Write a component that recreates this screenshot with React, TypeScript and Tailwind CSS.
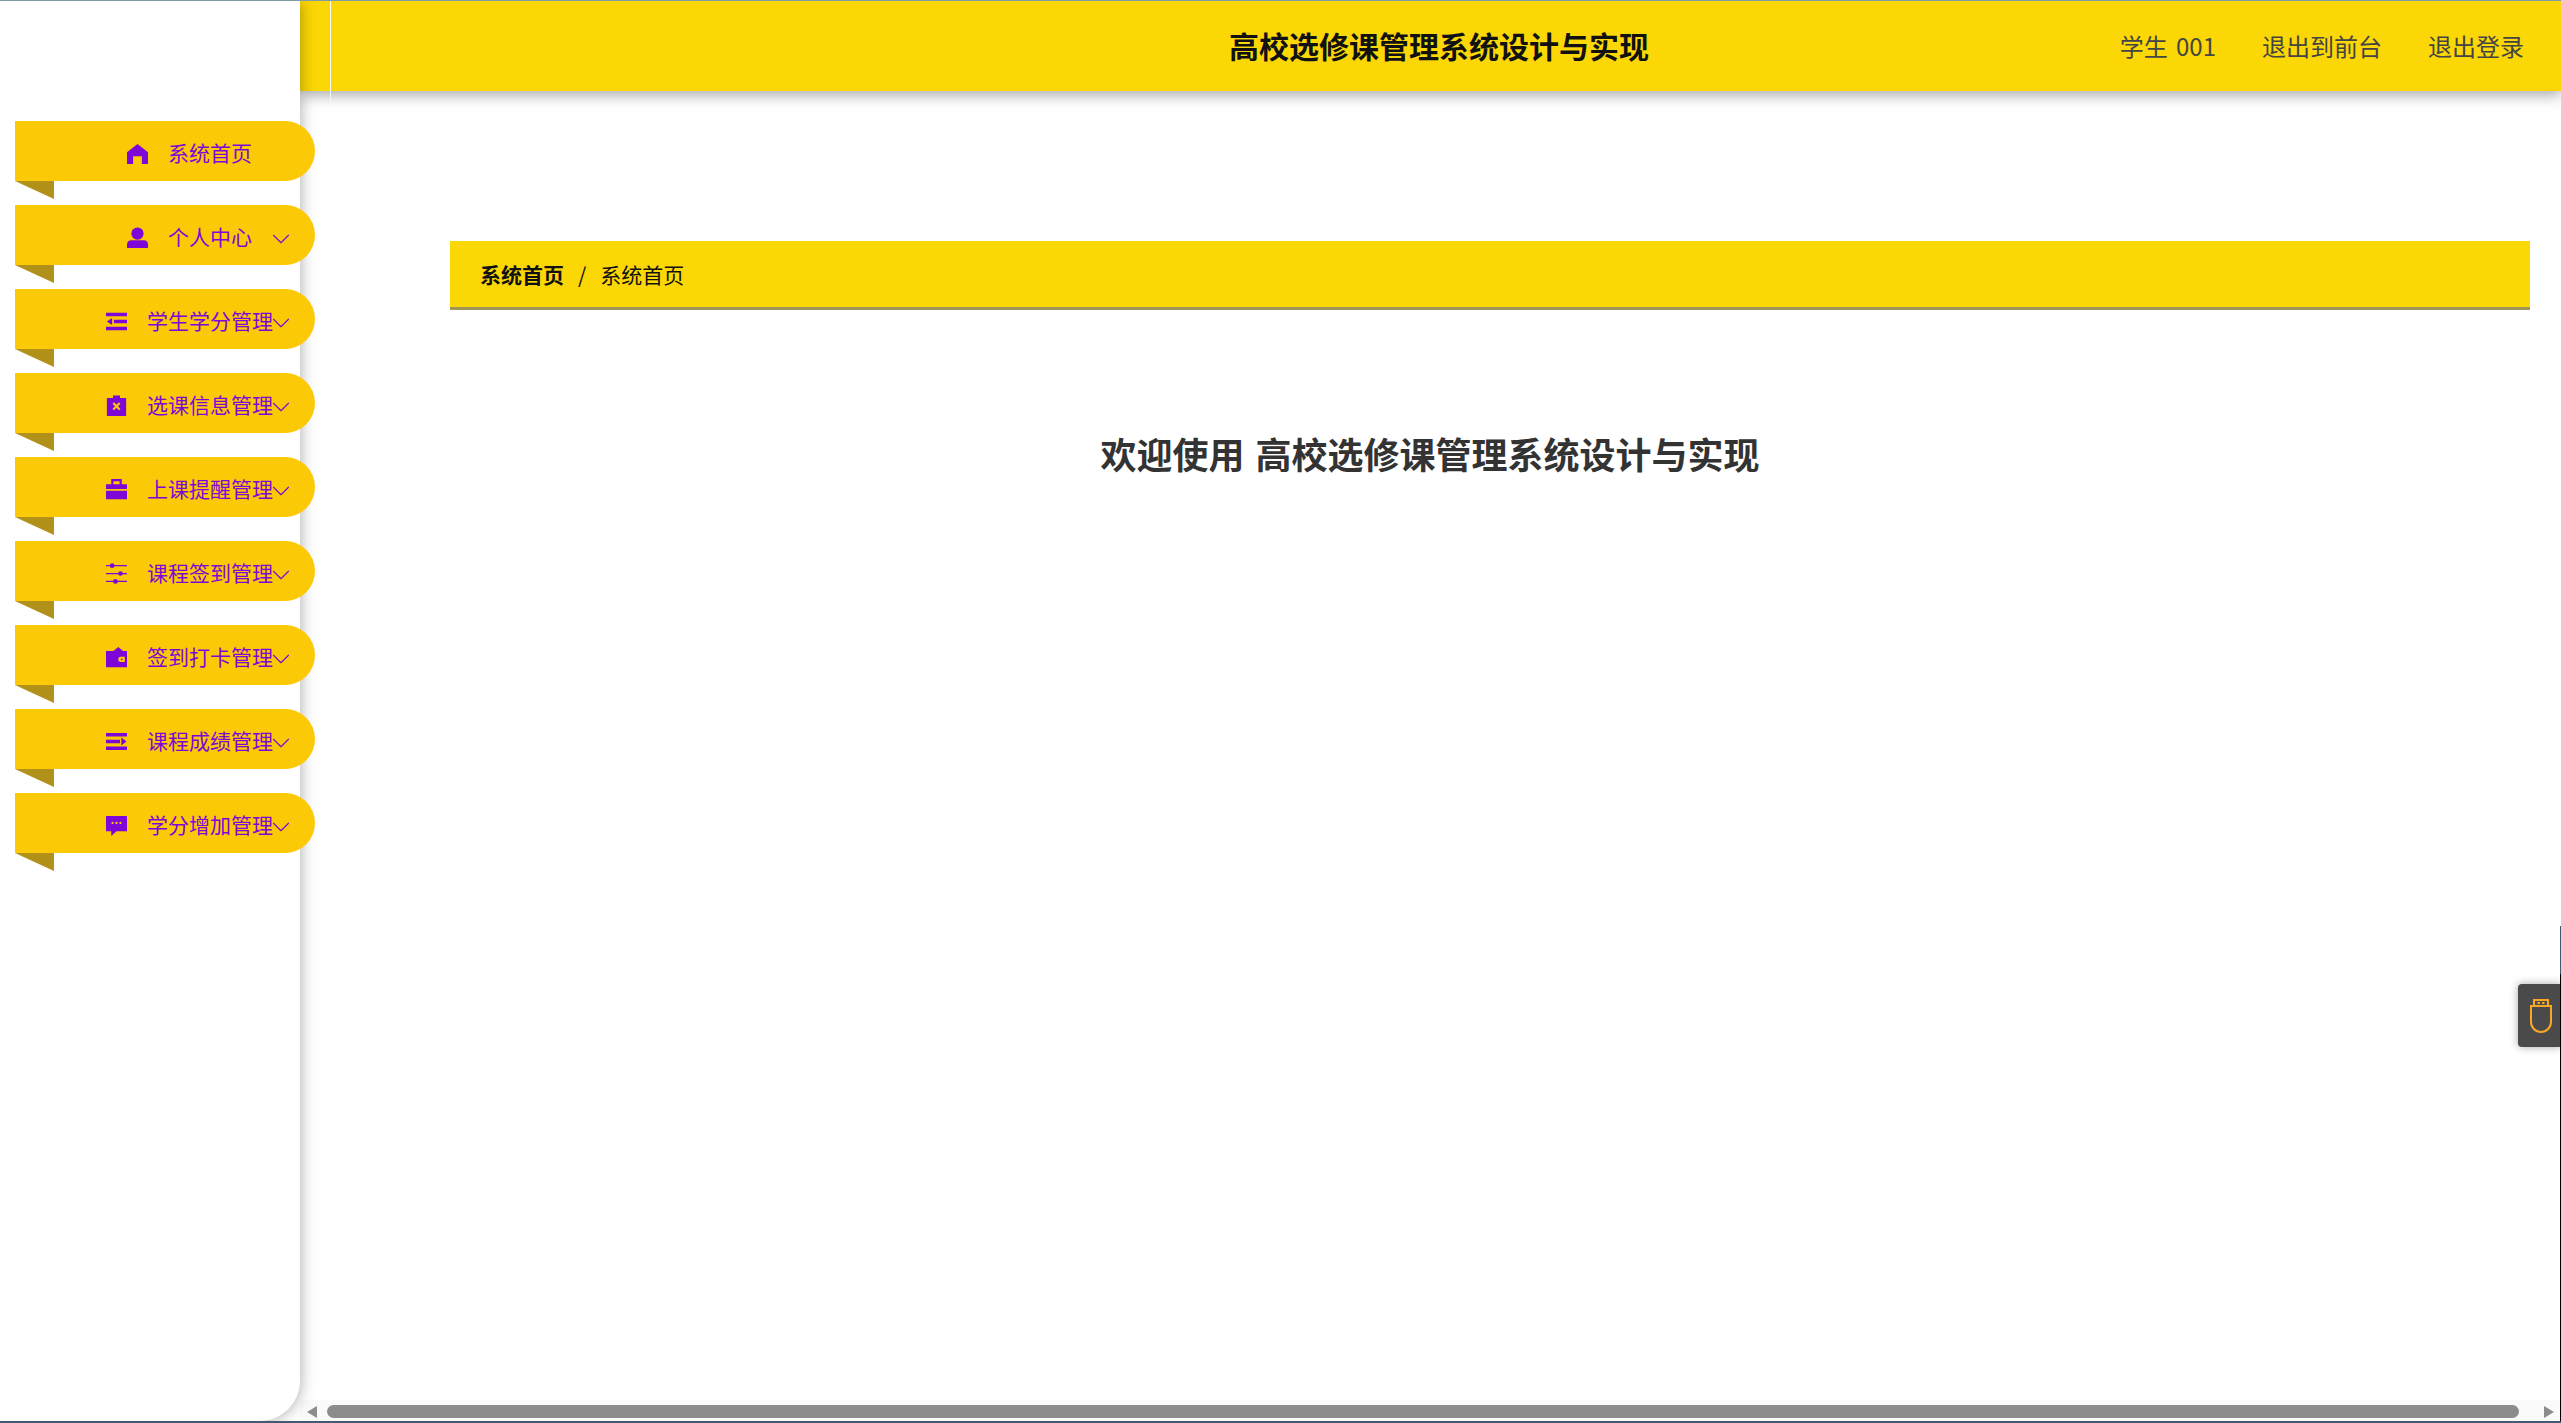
import { ChevronDown } from 'lucide-react'
import type { ReactNode } from 'react'

const fontStack = '[font-family:"Noto_Sans_CJK_SC","Liberation_Sans",sans-serif]'

const icons: Record<string, ReactNode> = {
  home: <path d="M12 1 24 10.500V24h-7v-9H7v9H0V10.500z" />,
  user: (
    <>
      <circle cx="12" cy="7.500" r="7" />
      <path d="M0 24v-4c0-3 2-4.800 5-4.800h14c3 0 5 1.800 5 4.800v4z" />
    </>
  ),
  list: <path d="M0 2h24v4H0zM9 10h15v4H9zM0 18h24v4H0zM7 8v8L1 12z" />,
  clip: (
    <path
      fillRule="evenodd"
      d="M8 3.500V.5h8v3h7V24H1V3.500zM7.500 10 9.200 8.300 12 11.100 14.800 8.300 16.500 10 13.700 12.800 16.500 15.600 14.800 17.300 12 14.500 9.200 17.300 7.500 15.600 10.300 12.800z"
    />
  ),
  case: <path fillRule="evenodd" d="M6 6V0h12v6h6v5.500H0V6zm2.500 0h7V2.500h-7zM0 13.500h24V23H0z" />,
  sliders: (
    <>
      <path d="M0 2.300h24v1.500H0zM0 11.300h24v1.500H0zM0 20.300h24v1.500H0z" />
      <circle cx="7" cy="3" r="2.700" />
      <circle cx="16.600" cy="12" r="2.700" />
      <circle cx="10.800" cy="21" r="2.700" />
    </>
  ),
  wallet: (
    <path
      fillRule="evenodd"
      d="M8.500 4.600 14 0l5.500 4.600H24V23H0V4.600zM17 11a3 3 0 0 0 0 6h4.500v-6zm1 2a1 1 0 1 1 0 2 1 1 0 0 1 0-2z"
    />
  ),
  lines: <path d="M0 2.300h24v3.900H0zM0 10h16v4H0zM17.500 7.500 23.500 12l-6 4.500zM0 17.800h24v3.900H0z" />,
  chat: (
    <path
      fillRule="evenodd"
      d="M0 1h24v17.500H12l-6 5.500v-5.500H0zm7.500 6.700a1.300 1.300 0 1 0 0 2.600 1.300 1.300 0 0 0 0-2.600zm4.500 0a1.300 1.300 0 1 0 0 2.600 1.300 1.300 0 0 0 0-2.600zm4.500 0a1.300 1.300 0 1 0 0 2.600 1.300 1.300 0 0 0 0-2.600z"
    />
  ),
}

const menu = [
  { label: '系统首页', icon: 'home', arrow: false },
  { label: '个人中心', icon: 'user', arrow: true },
  { label: '学生学分管理', icon: 'list', arrow: true },
  { label: '选课信息管理', icon: 'clip', arrow: true },
  { label: '上课提醒管理', icon: 'case', arrow: true },
  { label: '课程签到管理', icon: 'sliders', arrow: true },
  { label: '签到打卡管理', icon: 'wallet', arrow: true },
  { label: '课程成绩管理', icon: 'lines', arrow: true },
  { label: '学分增加管理', icon: 'chat', arrow: true },
]

function MenuItem({ label, icon, arrow }: { label: string; icon: string; arrow: boolean }) {
  return (
    <div className="relative">
      <div className="flex h-[60px] items-center justify-end rounded-r-[30px] bg-[#fcc907] pr-[27px] text-[21px] text-[#7e07d8]">
        <div className="flex w-[167px] items-center justify-center">
          <svg className="mr-[20px] mt-[5px] h-[21px] w-[21px]" viewBox="0 0 24 24" fill="currentColor">
            {icons[icon]}
          </svg>
          <span className="mt-[1px] leading-[30px]">{label}</span>
        </div>
        <span className="mt-[7px] flex w-[15px] justify-center">
          {arrow && <ChevronDown className="h-[30px] w-[30px] shrink-0" strokeWidth={0.9} />}
        </span>
      </div>
      <div className="h-[18px] w-[39px] bg-[#b2911a] [clip-path:polygon(0_0,100%_0,100%_100%)]" />
    </div>
  )
}

function Scrollbar() {
  return (
    <div className="flex h-[21px] items-end bg-[#fafafa] pb-[3px] pl-[7px] pr-[7px]">
      <div className="h-0 w-0 border-y-[6.5px] border-r-[10px] border-y-transparent border-r-[#8c8c8c]" />
      <div className="ml-[10px] h-[13px] w-[2192px] rounded-full bg-[#8c8c8c]" />
      <div className="ml-auto h-0 w-0 border-y-[6.5px] border-l-[10px] border-y-transparent border-l-[#8c8c8c]" />
    </div>
  )
}

export default function App() {
  return (
    <div className={`relative flex h-[1423px] w-full overflow-hidden border-t border-b-2 border-t-[#7f9aa8] border-b-[#44586e] bg-white ${fontStack}`}>
      <aside className="relative z-20 w-[300px] shrink-0 rounded-br-[40px] bg-white pt-[120px] shadow-[0_0_16px_rgba(0,0,0,0.35)]">
        <div className="flex w-[315px] flex-col gap-[6px] pl-[15px]">
          {menu.map(m => (
            <MenuItem key={m.label} {...m} />
          ))}
        </div>
      </aside>

      <main className="flex min-w-0 flex-1 flex-col">
        <header className="relative z-10 flex h-[90px] items-center bg-[#fbd705] shadow-[0_4px_14px_rgba(0,0,0,0.35)]">
          <div className="absolute left-[30px] top-0 h-[110px] w-px bg-gradient-to-b from-white from-80% to-white/0" />
          <h1 className="absolute left-[929px] -mt-[1px] text-[30px] font-bold text-[#111]">高校选修课管理系统设计与实现</h1>
          <nav className="ml-auto flex gap-[46px] pr-[37px] text-[24px] text-[#444] [word-spacing:3px]">
            <span>学生 001</span>
            <span>退出到前台</span>
            <span>退出登录</span>
          </nav>
        </header>

        <div className="flex-1 pl-[150px] pr-[31px] pt-[150px]">
          <div className="flex h-[69px] items-center gap-[14px] border-b-[3px] border-[#a09658] bg-[#fbd705] pl-[30px] pt-[1px] text-[21px] text-[#111]">
            <span className="font-bold">系统首页</span>
            <span>/</span>
            <span>系统首页</span>
          </div>
          <h2 className="mr-[120px] mt-[116px] text-center text-[36px] font-bold text-[#333] [word-spacing:3px]">
            欢迎使用 高校选修课管理系统设计与实现
          </h2>
        </div>

        <Scrollbar />
      </main>

      <div className="absolute right-0 top-[983px] z-30 flex h-[63px] w-[43px] items-center justify-center rounded-l-[4px] bg-[#4a4a4a] shadow-[0_0_8px_rgba(0,0,0,0.35)]">
        <svg className="ml-[2px] h-[34px] w-[22px]" viewBox="0 0 22 34" fill="none" stroke="#f9a825" strokeWidth="2">
          <path d="M1 7h20v16a10 10 0 0 1-20 0z" />
          <path d="M4 7V1h14v6" />
          <path d="M7.500 4h2.500M12 4h2.500" />
        </svg>
      </div>

      {/* window edge on the right */}
      <div className="absolute bottom-0 right-0 top-[925px] z-40 flex w-px flex-col">
        <div className="h-[48px] bg-[#44586e]" />
        <div className="flex-1 bg-black" />
      </div>
    </div>
  )
}
